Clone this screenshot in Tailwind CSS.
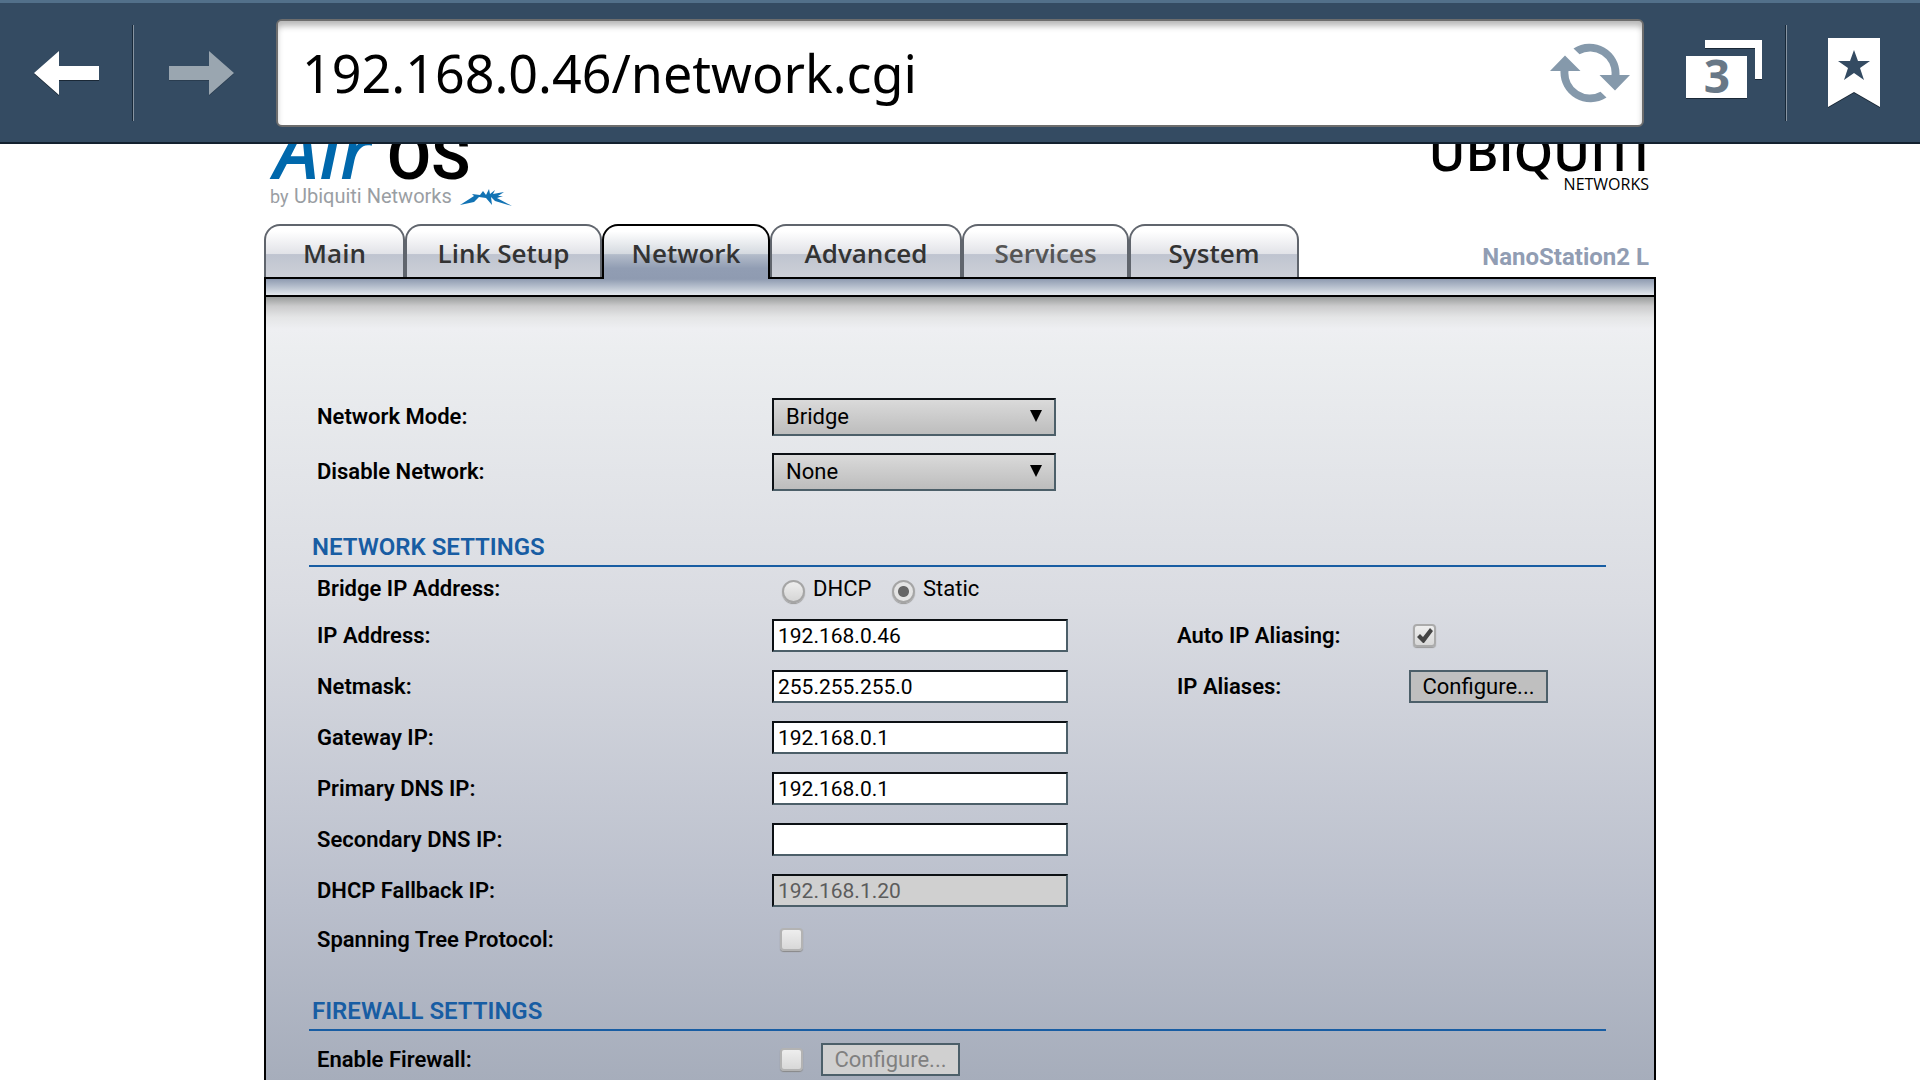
<!DOCTYPE html>
<html lang="en">
    <head>
        <title>Network - AirOS</title>
        <meta charset="UTF-8" />
        <meta name="viewport" content="width=device-width, initial-scale=1.0">
        <script src="https://cdn.jsdelivr.net/npm/@tailwindcss/browser@4"></script>
    </head>

    <body class="h-screen overflow-hidden bg-white flex flex-col font-['Roboto',sans-serif] text-[22px] leading-6 text-black">
        <!-- browser bar -->
        <div class="relative z-20 shrink-0 h-[144px] flex items-center bg-[#344b62] border-t-3 border-t-[#52708a] border-b-2 border-b-[#13212f]">
            <button type="button" aria-label="Back" class="w-[132px] h-24 flex items-center justify-center">
                <svg class="w-[66px] h-[46px] drop-shadow-[0_1px_0_#1a2836]" viewBox="0 0 66 46"><path fill="#fff" d="M1 23 26 1v15h40v14H26v15z"/></svg>
            </button>
            <div class="w-[2px] h-24 bg-[#172838] border-r border-[#8794a1]"></div>
            <button type="button" aria-label="Forward" class="w-[136px] h-24 flex items-center justify-center">
                <svg class="w-[66px] h-[46px] drop-shadow-[0_1px_0_#2a3d50]" viewBox="0 0 66 46"><path fill="#9aa6b0" d="M65 23 40 1v15H0v14h40v15z"/></svg>
            </button>
            <div class="ml-1.5 flex-1 h-[108px] flex items-center bg-white border-2 border-[#6d6d6d] rounded-md shadow-[inset_0_6px_6px_-1px_#b8b8b8]">
                <input type="text" aria-label="Address" value="192.168.0.46/network.cgi" class="flex-1 min-w-0 h-full pl-6 bg-transparent outline-none font-['Noto_Sans',sans-serif] text-[52px]">
                <button type="button" aria-label="Reload" class="mr-[10px]">
                    <svg class="w-[84px] h-[64px]" viewBox="-42 -32 84 64">
                        <g fill="#8599ab">
                            <path d="M-16.500-24.500A30 30 0 0 1 29.500 2H40L25 17.500 9.500 2H21.500A21.500 21.500 0 0 0-10.500-18.800z"/>
                            <path d="M16.500 24.500A30 30 0 0 1-29.500-2H-40L-25-17.500-9.500-2H-21.500A21.500 21.500 0 0 0 10.500 18.800z"/>
                        </g>
                    </svg>
                </button>
            </div>
            <button type="button" aria-label="3 windows" class="w-[141px] pl-5 pb-1 h-24 flex items-center justify-center">
                <svg class="w-[78px] h-[64px]" viewBox="0 0 78 64">
                    <g class="drop-shadow-[0_1px_0_#1a2836]" fill="#fff">
                        <path d="M0 17h61v42H0zM19 1h57v39h-7V9H19z"/>
                    </g>
                    <text x="31" y="54" text-anchor="middle" fill="#687887" class="font-['Noto_Sans',sans-serif] font-bold text-[46px]">3</text>
                </svg>
            </button>
            <div class="w-[2px] h-24 bg-[#172838] border-r border-[#8794a1]"></div>
            <button type="button" aria-label="Bookmarks" class="w-[133px] h-24 flex items-center justify-center">
                <svg class="w-[52px] h-[70px] drop-shadow-[0_1px_0_#1a2836]" viewBox="0 0 52 70">
                    <path fill="#fff" d="M0 0h52v69L26 54 0 69z"/>
                    <path fill="#344b62" d="M26 12l4 11h12l-10 7 4 12-10-7-10 7 4-12-10-7h12z"/>
                </svg>
            </button>
        </div>

        <main class="w-full max-w-[1392px] mx-auto grow shrink-0 flex flex-col">
            <!-- logos, scrolled halfway under the browser bar -->
            <header class="h-20 shrink-0 flex justify-between items-end pl-[6px] pr-[7px]">
                <div class="pb-[15px]">
                    <div class="flex items-baseline gap-4 pl-1 leading-[52px] whitespace-nowrap">
                        <span class="text-[#0068ac] italic font-['Open_Sans',sans-serif] font-semibold text-[76px]">Air</span>
                        <span class="font-semibold text-[64px]">OS</span>
                    </div>
                    <div class="flex items-center gap-2 leading-6 text-[#9a9ea3]">
                        <span><span class="text-[18px]">by</span> <span class="text-[20px]">Ubiquiti Networks</span></span>
                        <svg class="w-[52px] h-[18px]" viewBox="0 0 52 18"><path fill="#1273b4" d="M0 17 14 8l-2-2 8 1 3-4 3 4 3-6 1 5 5-4-2 4 11-2-6 4h5l-6 2 15 8-17-5-4-4 1 8-6-7-7-1-5 5z"/></svg>
                    </div>
                </div>
                <div class="pb-6 text-right font-['Open_Sans',sans-serif]">
                    <div class="font-semibold text-[50px] leading-8">UBIQUITI</div>
                    <div class="text-[16px] leading-8">NETWORKS</div>
                </div>
            </header>

            <div class="relative z-10 shrink-0 h-[54px] flex justify-between">
                <nav class="flex font-['Open_Sans',sans-serif] font-semibold text-[26px] text-[#333]">
                    <a href="#main" class="w-[141px] h-[53px] pt-[2px] flex items-center justify-center border-2 border-b-0 border-[#60656d] rounded-t-2xl bg-[linear-gradient(#fff_10%,#e2e3e8_54%,#bfc4d0_56%,#cdd0d7)]">Main</a>
                    <a href="#link" class="w-[197px] h-[53px] pt-[2px] flex items-center justify-center border-2 border-b-0 border-[#60656d] rounded-t-2xl bg-[linear-gradient(#fff_10%,#e2e3e8_54%,#bfc4d0_56%,#cdd0d7)]">Link Setup</a>
                    <a href="#network" class="w-[168px] h-[55px] flex items-center justify-center border-2 border-b-0 border-black rounded-t-2xl bg-[linear-gradient(#fff_10%,#d5dae0_52%,#b3bcca_54%,#919db3_80%,#8f9bb1)]">Network</a>
                    <a href="#advanced" class="w-[192px] h-[53px] pt-[2px] flex items-center justify-center border-2 border-b-0 border-[#60656d] rounded-t-2xl bg-[linear-gradient(#fff_10%,#e2e3e8_54%,#bfc4d0_56%,#cdd0d7)]">Advanced</a>
                    <a href="#services" class="w-[167px] h-[53px] pt-[2px] flex items-center justify-center border-2 border-b-0 border-[#60656d] rounded-t-2xl bg-[linear-gradient(#fff_10%,#e2e3e8_54%,#bfc4d0_56%,#cdd0d7)] text-[#555]">Services</a>
                    <a href="#system" class="w-[170px] h-[53px] pt-[2px] flex items-center justify-center border-2 border-b-0 border-[#60656d] rounded-t-2xl bg-[linear-gradient(#fff_10%,#e2e3e8_54%,#bfc4d0_56%,#cdd0d7)]">System</a>
                </nav>
                <div class="pr-[7px] pt-[21px] font-bold text-[24px] text-[#919db3]">NanoStation2 L</div>
            </div>
            <div class="shrink-0 -mt-px h-5 border-2 border-black bg-linear-to-b from-[#8f9bb1] to-[#e2e7ec]"></div>

            <form class="grow shrink-0 border-x-2 border-black bg-[linear-gradient(#999c9b,#cbcbcc_9px,#e4e5e6_20px,#eeeff2_32px,#eceef0_50px,#dadce2_304px,#babfcc_604px,#a6adbb_784px)] pt-[92px] pl-[43px] pr-12">
                <div class="grid grid-cols-[455px_1fr] items-center px-2 h-[55px]">
                    <label for="netmode" class="font-semibold">Network Mode:</label>
                    <div class="relative w-[284px]">
                        <select id="netmode" class="appearance-none w-full h-[38px] pl-3 border-2 border-t-[#0c1014] border-l-[#0c1014] border-r-[#4c5f69] border-b-[#4c5f69] bg-linear-to-b from-[#dadada] to-[#bdbdbd]">
                            <option>Bridge</option>
                            <option>Router</option>
                        </select>
                        <svg class="absolute right-[14px] top-3 w-3 h-3 pointer-events-none" viewBox="0 0 12 12"><path d="M0 0h12L6 12z"/></svg>
                    </div>
                </div>
                <div class="grid grid-cols-[455px_1fr] items-center px-2 h-[55px]">
                    <label for="netdisable" class="font-semibold">Disable Network:</label>
                    <div class="relative w-[284px]">
                        <select id="netdisable" class="appearance-none w-full h-[38px] pl-3 border-2 border-t-[#0c1014] border-l-[#0c1014] border-r-[#4c5f69] border-b-[#4c5f69] bg-linear-to-b from-[#dadada] to-[#bdbdbd]">
                            <option>None</option>
                            <option>WLAN</option>
                            <option>LAN</option>
                        </select>
                        <svg class="absolute right-[14px] top-3 w-3 h-3 pointer-events-none" viewBox="0 0 12 12"><path d="M0 0h12L6 12z"/></svg>
                    </div>
                </div>

                <h2 class="mt-7 h-10 pl-[3px] pt-[2px] flex items-center border-b-2 border-[#185da3] font-semibold text-[24px] text-[#185da3]">NETWORK SETTINGS</h2>
                <div class="grid grid-cols-[455px_1fr] items-center px-2 h-[43px]">
                    <span class="font-semibold">Bridge IP Address:</span>
                    <div class="flex items-center pl-[10px]">
                        <input type="radio" name="bridge" id="dhcp" class="appearance-none mt-[6px] size-[23px] rounded-full border-2 border-[#a5a5a5] bg-linear-to-b from-[#eee] to-[#d6d6d6] shadow-[0_1px_1px_#999] checked:bg-[radial-gradient(circle,#666_5px,#e4e4e4_6px)]">
                        <label for="dhcp" class="w-[87px] pl-2">DHCP</label>
                        <input type="radio" name="bridge" id="static" checked class="appearance-none mt-[6px] size-[23px] rounded-full border-2 border-[#a5a5a5] bg-linear-to-b from-[#eee] to-[#d6d6d6] shadow-[0_1px_1px_#999] checked:bg-[radial-gradient(circle,#666_5px,#e4e4e4_6px)]">
                        <label for="static" class="pl-2">Static</label>
                    </div>
                </div>
                <div class="grid grid-cols-[455px_405px_232px_1fr] items-center px-2 h-[51px]">
                    <label for="ip" class="font-semibold">IP Address:</label>
                    <input type="text" id="ip" value="192.168.0.46" class="w-[296px] h-[33px] px-1 border-2 border-t-[#0c1014] border-l-[#0c1014] border-r-[#4c5f69] border-b-[#4c5f69] bg-white text-[21px]">
                    <label for="aliasing" class="font-semibold">Auto IP Aliasing:</label>
                    <div class="relative w-6 h-6 ml-1">
                        <input type="checkbox" id="aliasing" checked class="peer block appearance-none size-[23px] rounded-sm border-2 border-[#ababab] bg-linear-to-b from-[#eee] to-[#d8d8d8] shadow-[0_1px_1px_#999]">
                        <svg class="absolute top-1 left-1 w-4 h-4 hidden peer-checked:block pointer-events-none" viewBox="0 0 16 16"><path fill="#444" d="M0 9l3-3 3 3 7-9 3 3-9 12H6z"/></svg>
                    </div>
                </div>
                <div class="grid grid-cols-[455px_405px_232px_1fr] items-center px-2 h-[51px]">
                    <label for="mask" class="font-semibold">Netmask:</label>
                    <input type="text" id="mask" value="255.255.255.0" class="w-[296px] h-[33px] px-1 border-2 border-t-[#0c1014] border-l-[#0c1014] border-r-[#4c5f69] border-b-[#4c5f69] bg-white text-[21px]">
                    <label for="aliases" class="font-semibold">IP Aliases:</label>
                    <button type="button" id="aliases" class="w-[139px] h-[33px] border-2 border-[#4c5f69] bg-[#bfbfbf]">Configure...</button>
                </div>
                <div class="grid grid-cols-[455px_1fr] items-center px-2 h-[51px]">
                    <label for="gateway" class="font-semibold">Gateway IP:</label>
                    <input type="text" id="gateway" value="192.168.0.1" class="w-[296px] h-[33px] px-1 border-2 border-t-[#0c1014] border-l-[#0c1014] border-r-[#4c5f69] border-b-[#4c5f69] bg-white text-[21px]">
                </div>
                <div class="grid grid-cols-[455px_1fr] items-center px-2 h-[51px]">
                    <label for="dns1" class="font-semibold">Primary DNS IP:</label>
                    <input type="text" id="dns1" value="192.168.0.1" class="w-[296px] h-[33px] px-1 border-2 border-t-[#0c1014] border-l-[#0c1014] border-r-[#4c5f69] border-b-[#4c5f69] bg-white text-[21px]">
                </div>
                <div class="grid grid-cols-[455px_1fr] items-center px-2 h-[51px]">
                    <label for="dns2" class="font-semibold">Secondary DNS IP:</label>
                    <input type="text" id="dns2" value="" class="w-[296px] h-[33px] px-1 border-2 border-t-[#0c1014] border-l-[#0c1014] border-r-[#4c5f69] border-b-[#4c5f69] bg-white text-[21px]">
                </div>
                <div class="grid grid-cols-[455px_1fr] items-center px-2 h-[51px]">
                    <label for="fallback" class="font-semibold">DHCP Fallback IP:</label>
                    <input type="text" id="fallback" value="192.168.1.20" disabled class="w-[296px] h-[33px] px-1 border-2 border-t-[#0c1014] border-l-[#0c1014] border-r-[#4c5f69] border-b-[#4c5f69] bg-[#d0d0d0] text-[21px] text-[#5c5c5c]">
                </div>
                <div class="grid grid-cols-[455px_1fr] items-center px-2 h-[47px]">
                    <label for="stp" class="font-semibold">Spanning Tree Protocol:</label>
                    <input type="checkbox" id="stp" class="ml-2 appearance-none size-[23px] rounded-sm border-2 border-[#b3b3b3] bg-linear-to-b from-[#eee] to-[#d8d8d8] shadow-[0_1px_1px_#888]">
                </div>

                <h2 class="mt-7 h-10 pl-[3px] pt-[2px] flex items-center border-b-2 border-[#185da3] font-semibold text-[24px] text-[#185da3]">FIREWALL SETTINGS</h2>
                <div class="grid grid-cols-[455px_1fr] items-center px-2 h-[57px]">
                    <label for="firewall" class="font-semibold">Enable Firewall:</label>
                    <div class="flex items-center pl-2 gap-[18px]">
                        <input type="checkbox" id="firewall" class="appearance-none size-[23px] rounded-sm border-2 border-[#b3b3b3] bg-linear-to-b from-[#eee] to-[#d8d8d8] shadow-[0_1px_1px_#888]">
                        <button type="button" disabled class="w-[139px] h-[33px] border-2 border-[#4c5f69] bg-[#d0d0d0] text-[#808080]">Configure...</button>
                    </div>
                </div>
            </form>
        </main>
    </body>
</html>
